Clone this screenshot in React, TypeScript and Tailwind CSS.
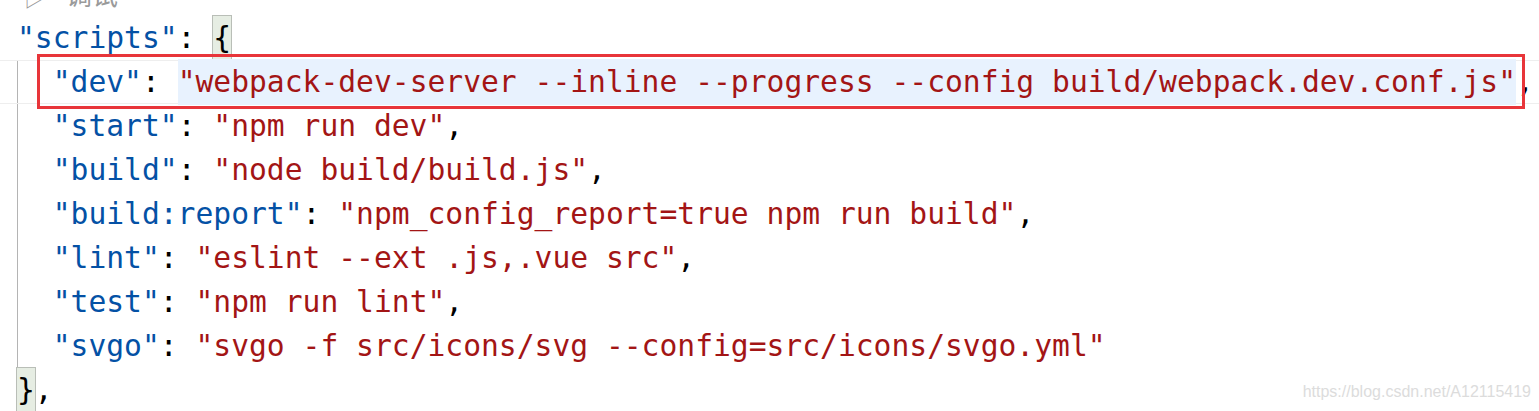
import React from 'react'

type Tok = { t: string; c?: 'key' | 'str' | 'punc' | 'brace' | 'sel' }

const lines: Tok[][] = [
  [{ t: '"scripts"', c: 'key' }, { t: ': ' }, { t: '{', c: 'brace' }],
  [{ t: '  ' }, { t: '"dev"', c: 'key' }, { t: ': ' }, { t: '"webpack-dev-server --inline --progress --config build/webpack.dev.conf.js"', c: 'sel' }, { t: ',' }],
  [{ t: '  ' }, { t: '"start"', c: 'key' }, { t: ': ' }, { t: '"npm run dev"', c: 'str' }, { t: ',' }],
  [{ t: '  ' }, { t: '"build"', c: 'key' }, { t: ': ' }, { t: '"node build/build.js"', c: 'str' }, { t: ',' }],
  [{ t: '  ' }, { t: '"build:report"', c: 'key' }, { t: ': ' }, { t: '"npm_config_report=true npm run build"', c: 'str' }, { t: ',' }],
  [{ t: '  ' }, { t: '"lint"', c: 'key' }, { t: ': ' }, { t: '"eslint --ext .js,.vue src"', c: 'str' }, { t: ',' }],
  [{ t: '  ' }, { t: '"test"', c: 'key' }, { t: ': ' }, { t: '"npm run lint"', c: 'str' }, { t: ',' }],
  [{ t: '  ' }, { t: '"svgo"', c: 'key' }, { t: ': ' }, { t: '"svgo -f src/icons/svg --config=src/icons/svgo.yml"', c: 'str' }],
  [{ t: '}', c: 'brace' }, { t: ',' }],
]

function Token({ tok }: { tok: Tok }) {
  if (tok.c === 'key') return <span className="text-[#0451a5]">{tok.t}</span>
  if (tok.c === 'str') return <span className="text-[#a31515]">{tok.t}</span>
  if (tok.c === 'sel') return <span className="text-[#a31515] bg-[#e8f2fe] py-[8px]">{tok.t}</span>
  if (tok.c === 'brace')
    return (
      <span className="bg-[#e6ede3] outline outline-1 outline-[#b9beb7] py-[7px]">{tok.t}</span>
    )
  return <span className="text-black">{tok.t}</span>
}

export default function App() {
  return (
    <div className="relative w-[1539px] h-[411px] overflow-hidden bg-white">
      <div
        className="whitespace-pre text-[29.65px] leading-none"
        style={{ fontFamily: '"DejaVu Sans Mono", "Liberation Mono", monospace' }}
      >
        {/* codelens row, mostly cut off */}
        <div className="h-[44px] -mt-[28px] flex items-end pl-[24px] pb-[9px] text-[#9a9a9a] text-[26px] gap-[20px]"
          style={{ fontFamily: '"Noto Sans CJK SC", sans-serif' }}>
          <span className="text-[22px]">▷</span>
          <span>调试</span>
        </div>

        {lines.map((ln, i) => (
          <div
            key={i}
            className={
              'relative h-[44px] flex items-center pl-[17px] ' +
              (i === 1 ? 'border-y border-[#eeeeee]' : '')
            }
          >
            {i >= 1 && i <= 7 && (
              <div className="absolute left-[17px] top-0 bottom-0 w-px bg-[#b4b4b4]" />
            )}
            {ln.map((tok, j) => (
              <Token key={j} tok={tok} />
            ))}
          </div>
        ))}
      </div>

      {/* red annotation box */}
      <div className="absolute left-[37px] top-[54px] w-[1488px] h-[55px] border-[3px] border-[#e8353a]" />

      {/* watermark */}
      <div
        className="absolute right-[8px] top-[380px] text-[16px] text-[#dcdcdc]"
        style={{ fontFamily: '"Liberation Sans", Arial, sans-serif' }}
      >
        https://blog.csdn.net/A12115419
      </div>
    </div>
  )
}
